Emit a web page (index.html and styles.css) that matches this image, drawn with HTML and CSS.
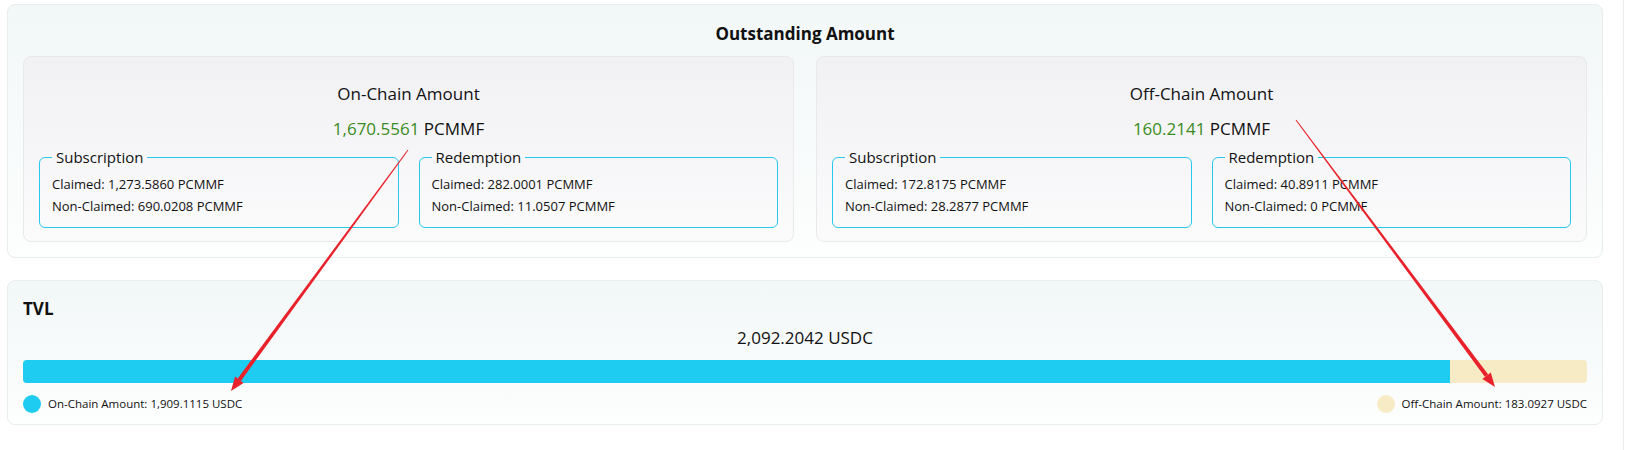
FILE: index.html
```html
<!DOCTYPE html>
<html>
<head>
<meta charset="utf-8">
<link rel="stylesheet" href="styles.css">
</head>
<body>
<div class="page">
  <div class="main">
    <section class="card outstanding">
      <h2 class="card-title">Outstanding Amount</h2>
      <div class="chains">
        <div class="chain">
          <div class="chain-title">On-Chain Amount</div>
          <div class="chain-amount"><span class="num">1,670.5561</span> PCMMF</div>
          <div class="groups">
            <fieldset class="group">
              <legend>Subscription</legend>
              <div class="line">Claimed: 1,273.5860 PCMMF</div>
              <div class="line">Non-Claimed: 690.0208 PCMMF</div>
            </fieldset>
            <fieldset class="group">
              <legend>Redemption</legend>
              <div class="line">Claimed: 282.0001 PCMMF</div>
              <div class="line">Non-Claimed: 11.0507 PCMMF</div>
            </fieldset>
          </div>
        </div>
        <div class="chain">
          <div class="chain-title">Off-Chain Amount</div>
          <div class="chain-amount"><span class="num">160.2141</span> PCMMF</div>
          <div class="groups">
            <fieldset class="group">
              <legend>Subscription</legend>
              <div class="line">Claimed: 172.8175 PCMMF</div>
              <div class="line">Non-Claimed: 28.2877 PCMMF</div>
            </fieldset>
            <fieldset class="group">
              <legend>Redemption</legend>
              <div class="line">Claimed: 40.8911 PCMMF</div>
              <div class="line">Non-Claimed: 0 PCMMF</div>
            </fieldset>
          </div>
        </div>
      </div>
    </section>
    <section class="card tvl">
      <h2 class="tvl-title">TVL</h2>
      <div class="tvl-total">2,092.2042 USDC</div>
      <div class="bar">
        <div class="bar-on" style="width: 91.249%"></div>
        <div class="bar-off"></div>
      </div>
      <div class="legend-row">
        <div class="legend-item"><span class="dot dot-on"></span>On-Chain Amount: 1,909.1115 USDC</div>
        <div class="legend-item"><span class="dot dot-off"></span>Off-Chain Amount: 183.0927 USDC</div>
      </div>
    </section>
  </div>
  <div class="gutter"></div>
</div>
<svg class="arrows" width="1627" height="450" viewBox="0 0 1627 450" xmlns="http://www.w3.org/2000/svg">
  <polygon fill="#e8212a" points="408.4,150.3 407.6,149.7 237.7,378.5 240.9,380.9"/>
  <polygon fill="#e8212a" points="231,391 243.5,383 235.1,376.5"/>
  <polygon fill="#e8212a" points="1296.4,119.7 1295.6,120.3 1485.0,377.0 1488.2,374.6"/>
  <polygon fill="#e8212a" points="1495,387 1490.8,372.5 1482.4,379.0"/>
</svg>
</body>
</html>
```
FILE: styles.css
```css
* { box-sizing: border-box; }
html, body { margin: 0; padding: 0; background: #ffffff; }
body {
  font-family: "Open Sans", "Noto Sans", sans-serif;
  color: #111;
  position: relative;
  width: 1627px;
  height: 450px;
  overflow: hidden;
}
.page { display: flex; height: 450px; }
.main {
  margin-left: 7px;
  width: 1596px;
  padding-top: 4px;
  display: flex;
  flex-direction: column;
  gap: 22px;
}
.gutter {
  margin-left: 20px;
  width: 4px;
  border-left: 1px solid #ececec;
  height: 450px;
}
.card {
  border: 1px solid #e8eded;
  border-radius: 8px;
  background: linear-gradient(180deg, #f2f7f7 0%, #fdfefe 100%);
}
.outstanding { padding: 17px 15px 15px 15px; height: 254px; }
.card-title {
  margin: 0 0 10px;
  font-size: 17px;
  line-height: 24px;
  font-weight: 700;
  text-align: center;
}
.chains { display: flex; gap: 22px; }
.chain {
  flex: 1;
  height: 186px;
  border: 1px solid #e9e9ec;
  border-radius: 8px;
  background: linear-gradient(180deg, #f1f1f4 0%, #fbfbfc 100%);
  padding: 25px 15px 14px 15px;
}
.chain-title {
  text-align: center;
  font-size: 17px;
  line-height: 24px;
}
.chain-amount {
  text-align: center;
  font-size: 17px;
  line-height: 24px;
  margin-top: 11px;
}
.num { color: #3a8c22; }
.groups { display: flex; gap: 20px; margin-top: 6px; }
.group {
  flex: 1;
  margin: 0;
  min-width: 0;
  border: 1px solid #27c8ee;
  border-radius: 6px;
  padding: 6px 12px 10px 12px;
}
.group legend {
  font-size: 15px;
  line-height: 20px;
  padding: 0 4px;
}
.line {
  font-size: 13px;
  line-height: 22px;
}
.tvl { padding: 16px 15px 12px 15px; height: 145px; }
.tvl-title {
  margin: 0;
  font-size: 17px;
  line-height: 24px;
  font-weight: 700;
}
.tvl-total {
  text-align: center;
  font-size: 17px;
  line-height: 24px;
  margin-top: 5px;
}
.bar {
  margin-top: 10px;
  height: 23px;
  display: flex;
  border-radius: 4px;
  overflow: hidden;
  background: #f7ebc6;
}
.bar-on { background: #1ecbf1; height: 100%; }
.bar-off { flex: 1; background: #f7ebc6; height: 100%; }
.legend-row {
  display: flex;
  justify-content: space-between;
  margin-top: 12px;
}
.legend-item {
  display: flex;
  align-items: center;
  gap: 7px;
  font-size: 11.5px;
  line-height: 18px;
}
.dot { width: 18px; height: 18px; border-radius: 50%; display: inline-block; }
.dot-on { background: #1ecbf1; }
.dot-off { background: #f7ebc6; }
.arrows { position: absolute; left: 0; top: 0; pointer-events: none; }
```
